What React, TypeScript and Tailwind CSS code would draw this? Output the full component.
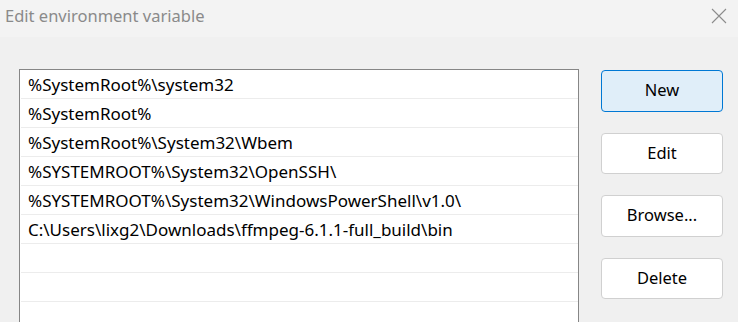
import React from "react";

const rows = [
  "%SystemRoot%\\system32",
  "%SystemRoot%",
  "%SystemRoot%\\System32\\Wbem",
  "%SYSTEMROOT%\\System32\\OpenSSH\\",
  "%SYSTEMROOT%\\System32\\WindowsPowerShell\\v1.0\\",
  "C:\\Users\\lixg2\\Downloads\\ffmpeg-6.1.1-full_build\\bin",
  "",
  "",
  "",
];

const buttons = ["New", "Edit", "Browse...", "Delete"];

export default function App() {
  return (
    <div
      className="w-[738px] h-[322px] overflow-hidden bg-[#f0f0f0] flex flex-col"
      style={{ fontFamily: '"Noto Sans", "Open Sans", sans-serif' }}
    >
      <div className="h-[37px] shrink-0 bg-[#f3f3f3] flex items-center justify-between pl-[5px] pr-[11px]">
        <span className="text-[16.5px] text-[#8a8a8a] leading-none -mt-[4px]">Edit environment variable</span>
        <svg width="16" height="16" viewBox="0 0 16 16" className="-mt-[6px]">
          <path d="M1 1 L15 15 M15 1 L1 15" stroke="#8c8c8c" strokeWidth="1.1" fill="none" />
        </svg>
      </div>
      <div className="flex flex-1 pt-[32px] pl-[19px]">
        <div className="w-[560px] h-[300px] shrink-0 bg-white border border-[#868686] border-b-0 pl-px">
          {rows.map((r, i) => (
            <div
              key={i}
              className="h-[29px] border-b border-[#ececec] flex items-center pl-[7px] pt-px text-[17px] text-black whitespace-nowrap"
            >
              {r}
            </div>
          ))}
        </div>
        <div className="flex flex-col gap-[21px] ml-[22px] mt-px">
          {buttons.map((b, i) => (
            <button
              key={b}
              className={
                i === 0
                  ? "w-[122px] h-[41.5px] rounded-[4px] border border-[#0078d4] bg-[#e0eef9] text-[16.5px] text-black"
                  : "w-[122px] h-[41.5px] rounded-[4px] border border-[#d0d0d0] bg-white text-[16.5px] text-black"
              }
            >
              {b}
            </button>
          ))}
        </div>
      </div>
    </div>
  );
}
